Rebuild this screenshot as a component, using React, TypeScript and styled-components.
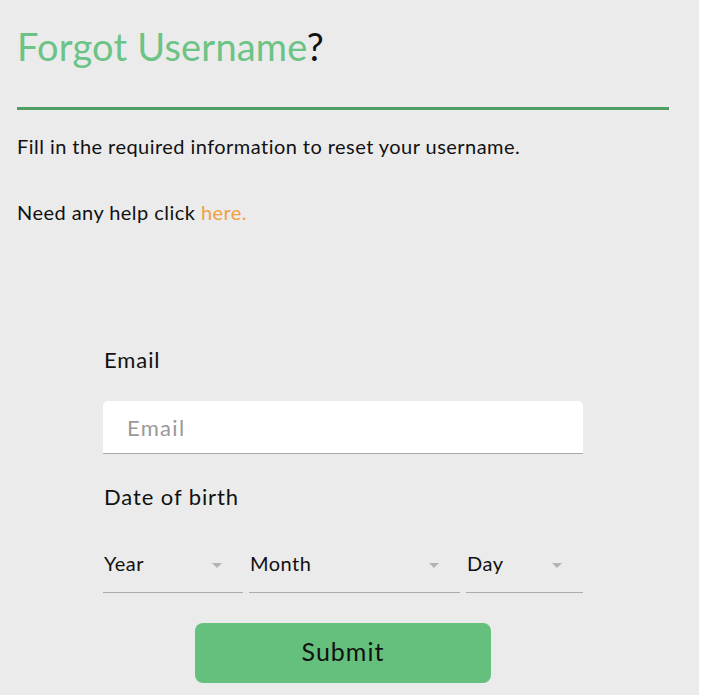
import React, { useState } from 'react'
import styled, { createGlobalStyle } from 'styled-components';

const GlobalStyle = createGlobalStyle`
    html, body {
        margin: 0;
        padding: 0;
        background-color: #FFF;
    }
    * {
        box-sizing: border-box;
    }
`;

const Page = styled.div`
    width: 699px;
    min-height: 695px;
    background-color: #EBEBEB;
    padding: 22px 30px 0 17px;
    font-family: Lato, "Noto Sans", sans-serif;
    color: #111;
`;

const Title = styled.h1`
    margin: 0;
    font-size: 38px;
    font-weight: 400;
    line-height: 48px;
    letter-spacing: 0.2px;
    color: #6CC386;
`;

const Question = styled.span`
    color: #111;
`;

const Divider = styled.hr`
    margin: 37px 0 0;
    border: 0;
    height: 3px;
    background-color: #4F9E64;
`;

const Text = styled.p`
    margin: 21px 0 0;
    font-size: 20px;
    line-height: 30px;
    letter-spacing: 0.45px;
    & + & {
        margin-top: 36px;
    }
`;

const HelpLink = styled.a`
    color: #F0A040;
    text-decoration: none;
`;

const Form = styled.form`
    width: 480px;
    margin: 118px auto 0;
    display: flex;
    flex-direction: column;
`;

const Label = styled.label`
    font-size: 22px;
    line-height: 30px;
    letter-spacing: 0.9px;
    margin-left: 1px;
`;

const EmailInput = styled.input`
    margin-top: 26px;
    margin-bottom: 28px;
    height: 53px;
    width: 100%;
    border: 0;
    border-bottom: 1px solid #AAA;
    border-radius: 5px 5px 0 0;
    background-color: #FFF;
    padding: 0 24px;
    font-family: inherit;
    font-size: 22px;
    letter-spacing: 1.3px;
    color: #111;
    outline: none;
    &::placeholder {
        color: #999;
    }
`;

const DateRow = styled.div`
    margin-top: 32px;
    display: flex;
    gap: 6px;
`;

const SelectBox = styled.div<{ $width: number }>`
    width: ${p => p.$width}px;
    height: 49px;
    border-bottom: 1px solid #AAA;
    display: flex;
    align-items: center;
    justify-content: space-between;
    padding: 0 21px 10px 1px;
    font-size: 20px;
    letter-spacing: 0.5px;
    cursor: pointer;
`;

const Arrow = styled.span`
    width: 0;
    height: 0;
    border-left: 5px solid transparent;
    border-right: 5px solid transparent;
    border-top: 5px solid #B3B3B3;
    margin-top: 4px;
`;

const SubmitButton = styled.button`
    align-self: center;
    margin-top: 30px;
    width: 296px;
    height: 60px;
    padding: 0 0 4px;
    border: 0;
    border-radius: 8px;
    background-color: #64C07C;
    font-family: inherit;
    font-size: 25px;
    letter-spacing: 1px;
    color: #111;
    cursor: pointer;
`;

const App = () => {
    const [email, setEmail] = useState("");

    return (
        <>
            <GlobalStyle />
            <Page>
                <Title>
                    Forgot Username<Question>?</Question>
                </Title>
                <Divider />
                <Text>Fill in the required information to reset your username.</Text>
                <Text>
                    Need any help click <HelpLink href="#">here.</HelpLink>
                </Text>
                <Form onSubmit={e => e.preventDefault()}>
                    <Label>Email</Label>
                    <EmailInput
                        type="email"
                        placeholder="Email"
                        value={email}
                        onChange={e => setEmail(e.target.value)}
                    />
                    <Label>Date of birth</Label>
                    <DateRow>
                        <SelectBox $width={140}>Year<Arrow /></SelectBox>
                        <SelectBox $width={211}>Month<Arrow /></SelectBox>
                        <SelectBox $width={117}>Day<Arrow /></SelectBox>
                    </DateRow>
                    <SubmitButton type="submit">Submit</SubmitButton>
                </Form>
            </Page>
        </>
    )
}

export default App;
